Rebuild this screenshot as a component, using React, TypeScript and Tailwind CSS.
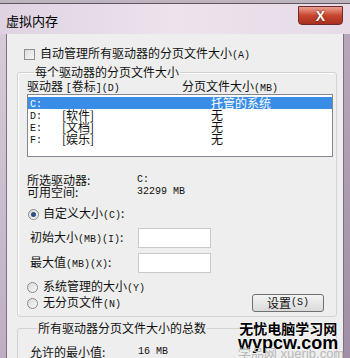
import React from "react";

const M = ({ children }: { children: React.ReactNode }) => (
  <span className="font-['Liberation_Mono',monospace] text-[10px]">{children}</span>
);

const Checkbox = () => (
  <span className="inline-block w-[11px] h-[11px] border border-[#8f8f8f] bg-gradient-to-br from-[#dcdcdc] to-[#f8f8f8] shrink-0" />
);

const Radio = ({ on }: { on?: boolean }) => (
  <span className="flex items-center justify-center w-[11px] h-[11px] rounded-full border border-[#8a8a8a] bg-gradient-to-br from-[#d8d8d8] to-[#fafafa] shrink-0">
    {on && <span className="w-[5px] h-[5px] rounded-full bg-[#2c4f86]" />}
  </span>
);

export default function App() {
  return (
    <div className="relative w-[350px] h-[358px] overflow-hidden bg-[#c4b6c8] font-['Noto_Sans_CJK_SC',sans-serif] text-[12px] leading-[12px] text-[#111]">
      {/* strip of window behind */}
      <div className="h-[4px] bg-[#bdb5bd] border-b border-[#5e5660]" />
      {/* title bar */}
      <div className="h-[30px] flex justify-between bg-gradient-to-r from-[#dfd3e1] via-[#ece3ed] to-[#e6dbe6]">
        <div className="pl-[6px] pt-[10px] text-[13px] leading-[14px] text-black">虚拟内存</div>
        <div className="mr-[7px] mt-[2px] w-[45px] h-[19px] rounded-b-[4px] border border-[#6e2a2a] bg-gradient-to-b from-[#e8a090] via-[#c8452f] to-[#a8301e] flex items-center justify-center">
          <span className="text-white font-bold text-[14px] leading-[14px] font-['Liberation_Sans',sans-serif] [text-shadow:0_0_2px_#4a1010]">X</span>
        </div>
      </div>
      {/* body */}
      <div className="flex h-[324px]">
        <div className="w-[6px] bg-gradient-to-b from-[#d8cada] to-[#bfaec3]" />
        <div className="flex-1 bg-[#eeeeee] border-x border-[#7d7080] pt-[14px]">
          <div className="flex items-center pl-[17px] h-[12px]">
            <Checkbox />
            <span className="ml-[5px]">自动管理所有驱动器的分页文件大小<M>(A)</M></span>
          </div>

          <fieldset className="mt-[5px] ml-[10px] w-[320px] border border-[#d2d2d2] rounded-[3px] pl-[9px] pb-[4px] shadow-[inset_1px_1px_0_#ffffff]">
            <legend className="ml-[7px] px-[1px] leading-[14px] h-[14px]">每个驱动器的分页文件大小</legend>
            <div className="flex mt-[1px] h-[12px]">
              <span className="w-[155px]">驱动器 <M>[</M>卷标<M>](D)</M></span>
              <span>分页文件大小<M>(MB)</M></span>
            </div>
            <div className="mt-[2px] w-[306px] h-[63px] border border-[#828790] bg-white pt-[2px]">
              <div className="flex h-[12px] items-center bg-[#3a8de6] text-white">
                <span className="w-[183px] pl-[2px]"><M>C:</M></span>
                <span>托管的系统</span>
              </div>
              {[
                ["D:", "软件"],
                ["E:", "文档"],
                ["F:", "娱乐"],
              ].map(([d, l]) => (
                <div key={d} className="flex h-[12px] items-center">
                  <span className="w-[34px] pl-[2px]"><M>{d}</M></span>
                  <span className="w-[149px]">[{l}]</span>
                  <span>无</span>
                </div>
              ))}
            </div>

            <div className="mt-[17px] flex h-[12px]">
              <span className="w-[110px]">所选驱动器:</span>
              <M>C:</M>
            </div>
            <div className="flex h-[12px]">
              <span className="w-[110px]">可用空间:</span>
              <M>32299 MB</M>
            </div>

            <div className="mt-[10px] flex items-center h-[12px] pl-[1px]">
              <Radio on />
              <span className="ml-[4px]">自定义大小<M>(C)</M>:</span>
            </div>
            <div className="mt-[8px] flex items-center h-[20px] pl-[3px]">
              <span className="w-[108px]">初始大小<M>(MB)(I)</M>:</span>
              <span className="w-[73px] h-[20px] bg-white border border-[#c9c9c9]" />
            </div>
            <div className="mt-[5px] flex items-center h-[20px] pl-[3px]">
              <span className="w-[108px]">最大值<M>(MB)(X)</M>:</span>
              <span className="w-[73px] h-[20px] bg-white border border-[#c9c9c9]" />
            </div>

            <div className="mt-[8px] flex items-center h-[12px]">
              <Radio />
              <span className="ml-[5px]">系统管理的大小<M>(Y)</M></span>
            </div>
            <div className="mt-[1px] flex items-center justify-between h-[18px] pr-[12px]">
              <div className="flex items-center">
                <Radio />
                <span className="ml-[5px]">无分页文件<M>(N)</M></span>
              </div>
              <button className="w-[72px] h-[18px] rounded-[3px] border border-[#707070] bg-gradient-to-b from-[#f4f4f4] to-[#dadada] flex items-center justify-center leading-[12px]">
                设置<M>(S)</M>
              </button>
            </div>
          </fieldset>

          <fieldset className="mt-[4px] ml-[10px] w-[320px] border border-[#d2d2d2] rounded-[3px] pl-[12px] h-[60px]">
            <legend className="ml-[7px] px-[1px] leading-[14px] h-[14px]">所有驱动器分页文件大小的总数</legend>
            <div className="mt-[10px] flex items-center h-[14px]">
              <span className="w-[108px]">允许的最小值:</span>
              <M>16 MB</M>
            </div>
            <div className="flex items-center h-[14px]">
              <span className="w-[108px]">推荐:</span>
              <M>5071 MB</M>
            </div>
          </fieldset>
        </div>
        <div className="w-[6px] bg-gradient-to-b from-[#b9a6bd] to-[#a18fa6]" />
      </div>

      {/* watermark */}
      <div className="absolute left-[238px] top-[320px] flex flex-col items-center">
        <span className="font-['Noto_Sans_CJK_SC',sans-serif] font-bold text-[14px] leading-[16px] text-black tracking-[0px] [text-shadow:0_0_2px_#fff,0_0_2px_#fff]">无忧电脑学习网</span>
        <span className="font-['Liberation_Sans',sans-serif] font-bold text-[18px] leading-[15px] text-black [text-shadow:0_0_2px_#fff,0_0_2px_#fff]">wypcw.com</span>
      </div>
      <div className="absolute left-[238px] top-[347px] text-[13px] leading-[14px] text-[#b8b8b8] font-['Liberation_Sans','Noto_Sans_CJK_SC',sans-serif]">学品网 xuerib.com</div>
    </div>
  );
}
